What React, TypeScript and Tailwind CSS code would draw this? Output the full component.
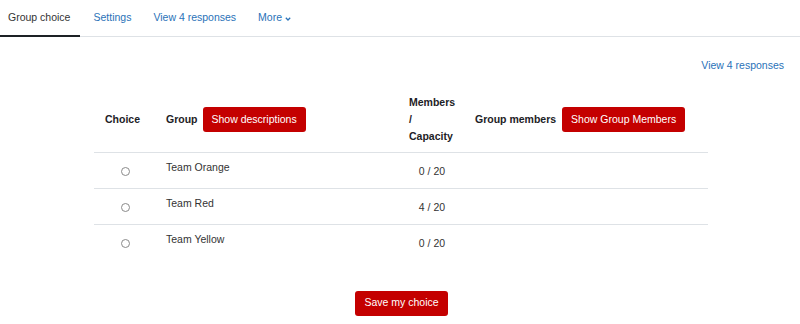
export default function App() {
  const rows = [
    { name: "Team Orange", count: "0 / 20" },
    { name: "Team Red", count: "4 / 20" },
    { name: "Team Yellow", count: "0 / 20" },
  ];

  return (
    <div className="min-h-screen w-[800px] bg-white text-[10.5px] text-[#1d2125] font-['Liberation_Sans',Arial,sans-serif]">
      {/* tabs */}
      <nav className="flex h-[37px] gap-[4px] border-b border-[#dee2e6]">
        <a className="-mb-px flex items-center border-b-2 border-[#1d2125] px-[8px] pr-[10px] text-[#333]">
          Group choice
        </a>
        <a className="flex items-center px-[9px] text-[#2a72b8]">Settings</a>
        <a className="flex items-center px-[9px] text-[#2a72b8]">View 4 responses</a>
        <a className="flex items-center gap-[3px] px-[9px] text-[#2a72b8]">
          More
          <svg width="6" height="4" viewBox="0 0 6 4" className="mt-[1px]">
            <path d="M0.8 0.8 L3 3 L5.2 0.8" fill="none" stroke="currentColor" strokeWidth="1.3" />
          </svg>
        </a>
      </nav>

      <div className="flex justify-end pr-[16px] pt-[20px]">
        <a className="leading-[16px] text-[#2a72b8]">View 4 responses</a>
      </div>

      <table className="ml-[94px] mt-[13px] w-[614px] table-fixed border-collapse">
        <colgroup>
          <col className="w-[61px]" />
          <col className="w-[243px]" />
          <col className="w-[68px]" />
          <col className="w-[242px]" />
        </colgroup>
        <thead>
          <tr className="border-b border-[#dee2e6]">
            <th className="px-[11px] pb-[7px] pt-[8px] text-left align-middle font-bold">Choice</th>
            <th className="px-[11px] pb-[7px] pt-[8px] text-left align-middle font-bold">
              <div className="flex items-center gap-[6px]">
                <span>Group</span>
                <button className="-ml-px h-[25px] rounded-[3px] bg-[#c40000] px-[9px] font-normal text-white">
                  Show descriptions
                </button>
              </div>
            </th>
            <th className="px-[11px] pb-[7px] pt-[8px] text-left align-middle font-bold leading-[17px]">
              Members / Capacity
            </th>
            <th className="pb-[7px] pl-[9px] pr-[11px] pt-[8px] text-left align-middle font-bold">
              <div className="flex items-center gap-[6px]">
                <span>Group members</span>
                <button className="h-[25px] rounded-[3px] bg-[#c40000] px-[9px] font-normal text-white">
                  Show Group Members
                </button>
              </div>
            </th>
          </tr>
        </thead>
        <tbody>
          {rows.map((r, i) => (
            <tr key={r.name} className={i < rows.length - 1 ? "h-[36px] border-b border-[#dee2e6]" : "h-[36px]"}>
              <td className="px-[11px] align-middle">
                <div className="flex justify-center pl-[2px] pt-[1px]">
                  <span className="block h-[9px] w-[9px] rounded-full border border-[#8a8a8a] bg-white" />
                </div>
              </td>
              <td className="px-[11px] pt-[6px] align-top leading-[16px] text-[#333]">{r.name}</td>
              <td className="px-[11px] pt-[2px] text-center align-middle text-[#333]">{r.count}</td>
              <td className="px-[11px]"></td>
            </tr>
          ))}
        </tbody>
      </table>

      <div className="flex justify-center pl-[3px] pt-[30px]">
        <button className="h-[25px] rounded-[3px] bg-[#c40000] px-[9px] text-white">Save my choice</button>
      </div>
    </div>
  );
}
